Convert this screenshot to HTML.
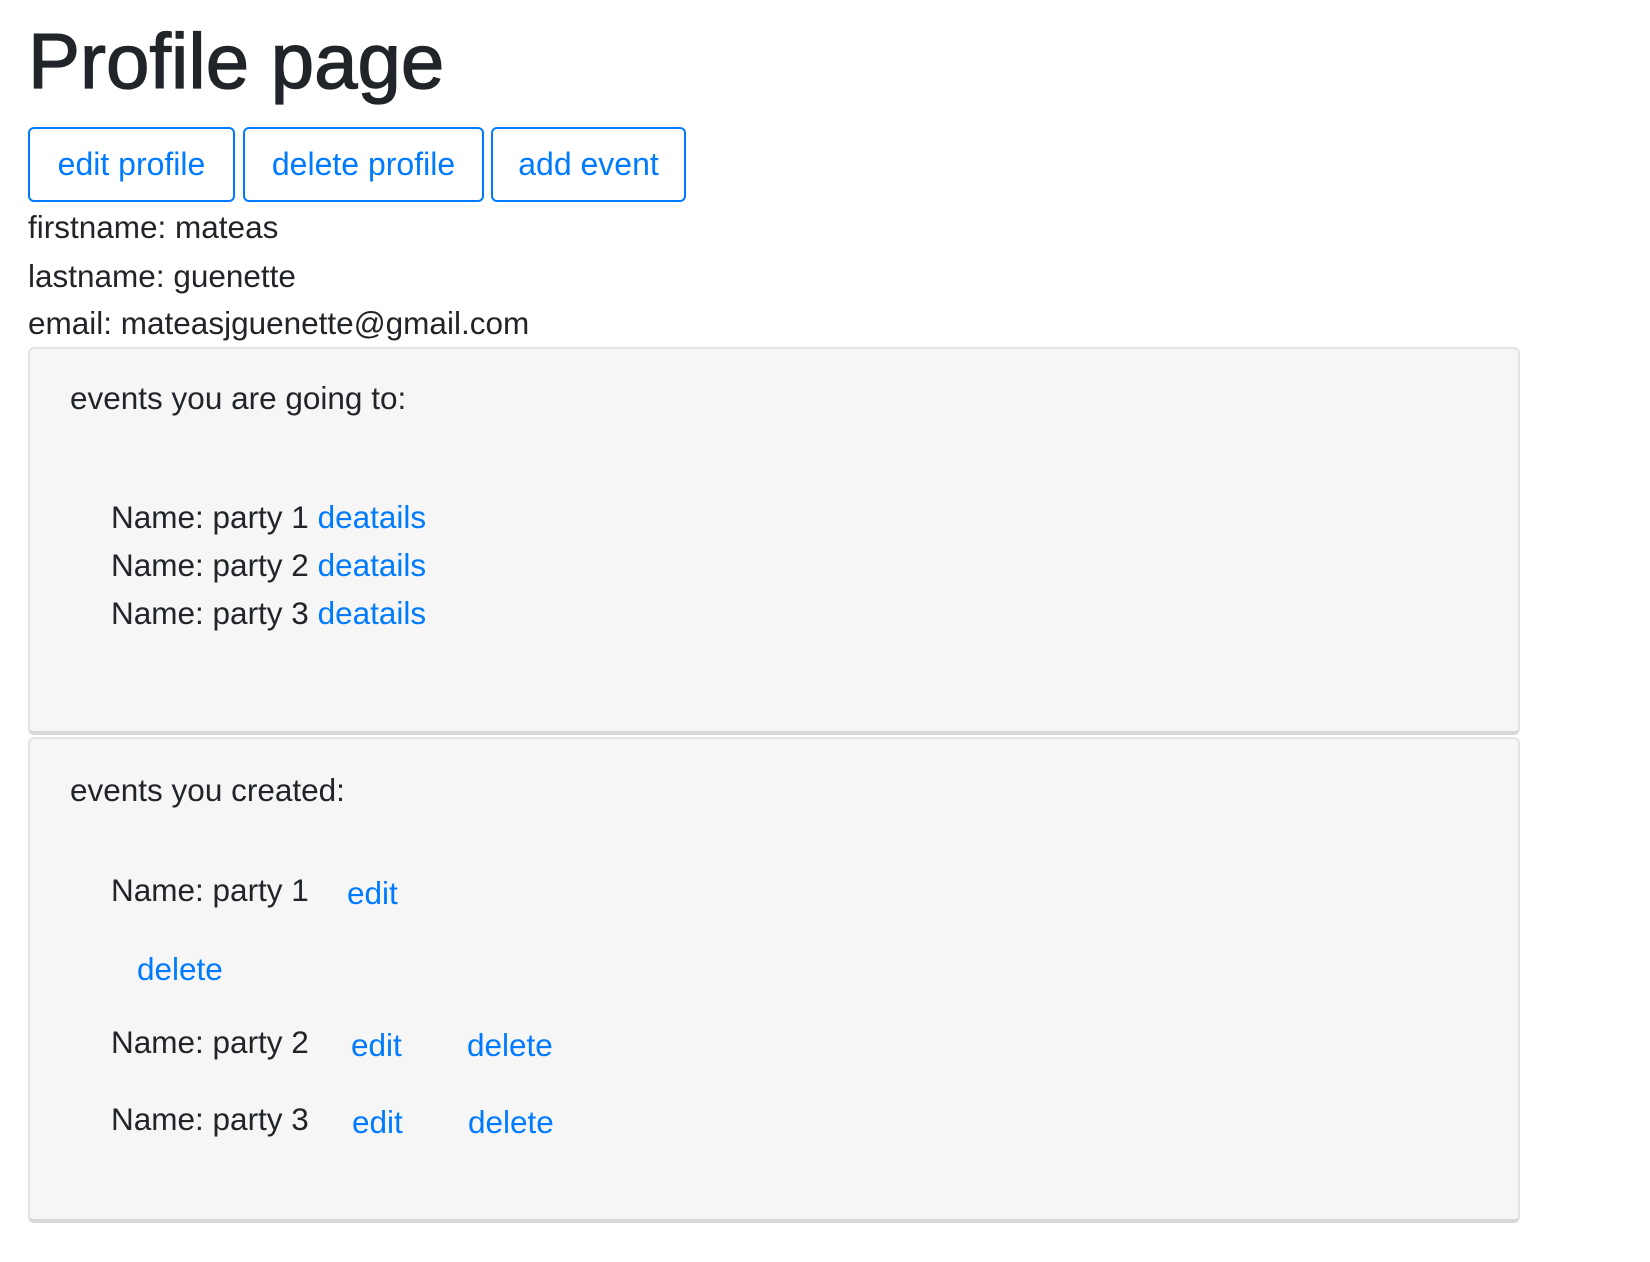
<!DOCTYPE html>
<html><head><meta charset="utf-8"><style>
body{margin:0;width:1650px;height:1262px;background:#fff;font-family:"Liberation Sans",sans-serif;color:#212529;position:relative;overflow:hidden}
.a{position:absolute;white-space:nowrap;font-size:31.5px;line-height:48px}
.l{color:#007bff}
h1{position:absolute;left:28px;top:13px;margin:0;font-size:78px;line-height:96px;font-weight:normal;letter-spacing:0;-webkit-text-stroke:1.3px #212529}
.btn{position:absolute;top:127px;height:71px;border:2px solid #007bff;border-radius:6px;color:#007bff;font-size:32px;line-height:71px;text-align:center;box-sizing:content-box}
.box{position:absolute;left:28px;width:1492px;background:#f6f6f6;border:2px solid #e3e3e3;border-bottom:4px solid #d9d9d9;border-radius:6px;box-sizing:border-box}
</style></head><body>
<h1>Profile page</h1>
<div class="btn" style="left:28px;width:203px">edit profile</div>
<div class="btn" style="left:243px;width:237px">delete profile</div>
<div class="btn" style="left:491px;width:191px">add event</div>
<div class="a" style="left:28px;top:203px">firstname: mateas</div>
<div class="a" style="left:28px;top:252px">lastname: guenette</div>
<div class="a" style="left:28px;top:299px">email: mateasjguenette@gmail.com</div>
<div class="box" style="top:347px;height:388px"></div>
<div class="box" style="top:737px;height:486px"></div>
<div class="a" style="left:70px;top:374px">events you are going to:</div>
<div class="a" style="left:111px;top:493px">Name: party 1 <span class="l">deatails</span></div>
<div class="a" style="left:111px;top:541px">Name: party 2 <span class="l">deatails</span></div>
<div class="a" style="left:111px;top:589px">Name: party 3 <span class="l">deatails</span></div>
<div class="a" style="left:70px;top:766px">events you created:</div>
<div class="a" style="left:111px;top:866px">Name: party 1</div>
<div class="a l" style="left:347px;top:869px">edit</div>
<div class="a l" style="left:137px;top:945px">delete</div>
<div class="a" style="left:111px;top:1018px">Name: party 2</div>
<div class="a l" style="left:351px;top:1021px">edit</div>
<div class="a l" style="left:467px;top:1021px">delete</div>
<div class="a" style="left:111px;top:1095px">Name: party 3</div>
<div class="a l" style="left:352px;top:1098px">edit</div>
<div class="a l" style="left:468px;top:1098px">delete</div>
</body></html>
